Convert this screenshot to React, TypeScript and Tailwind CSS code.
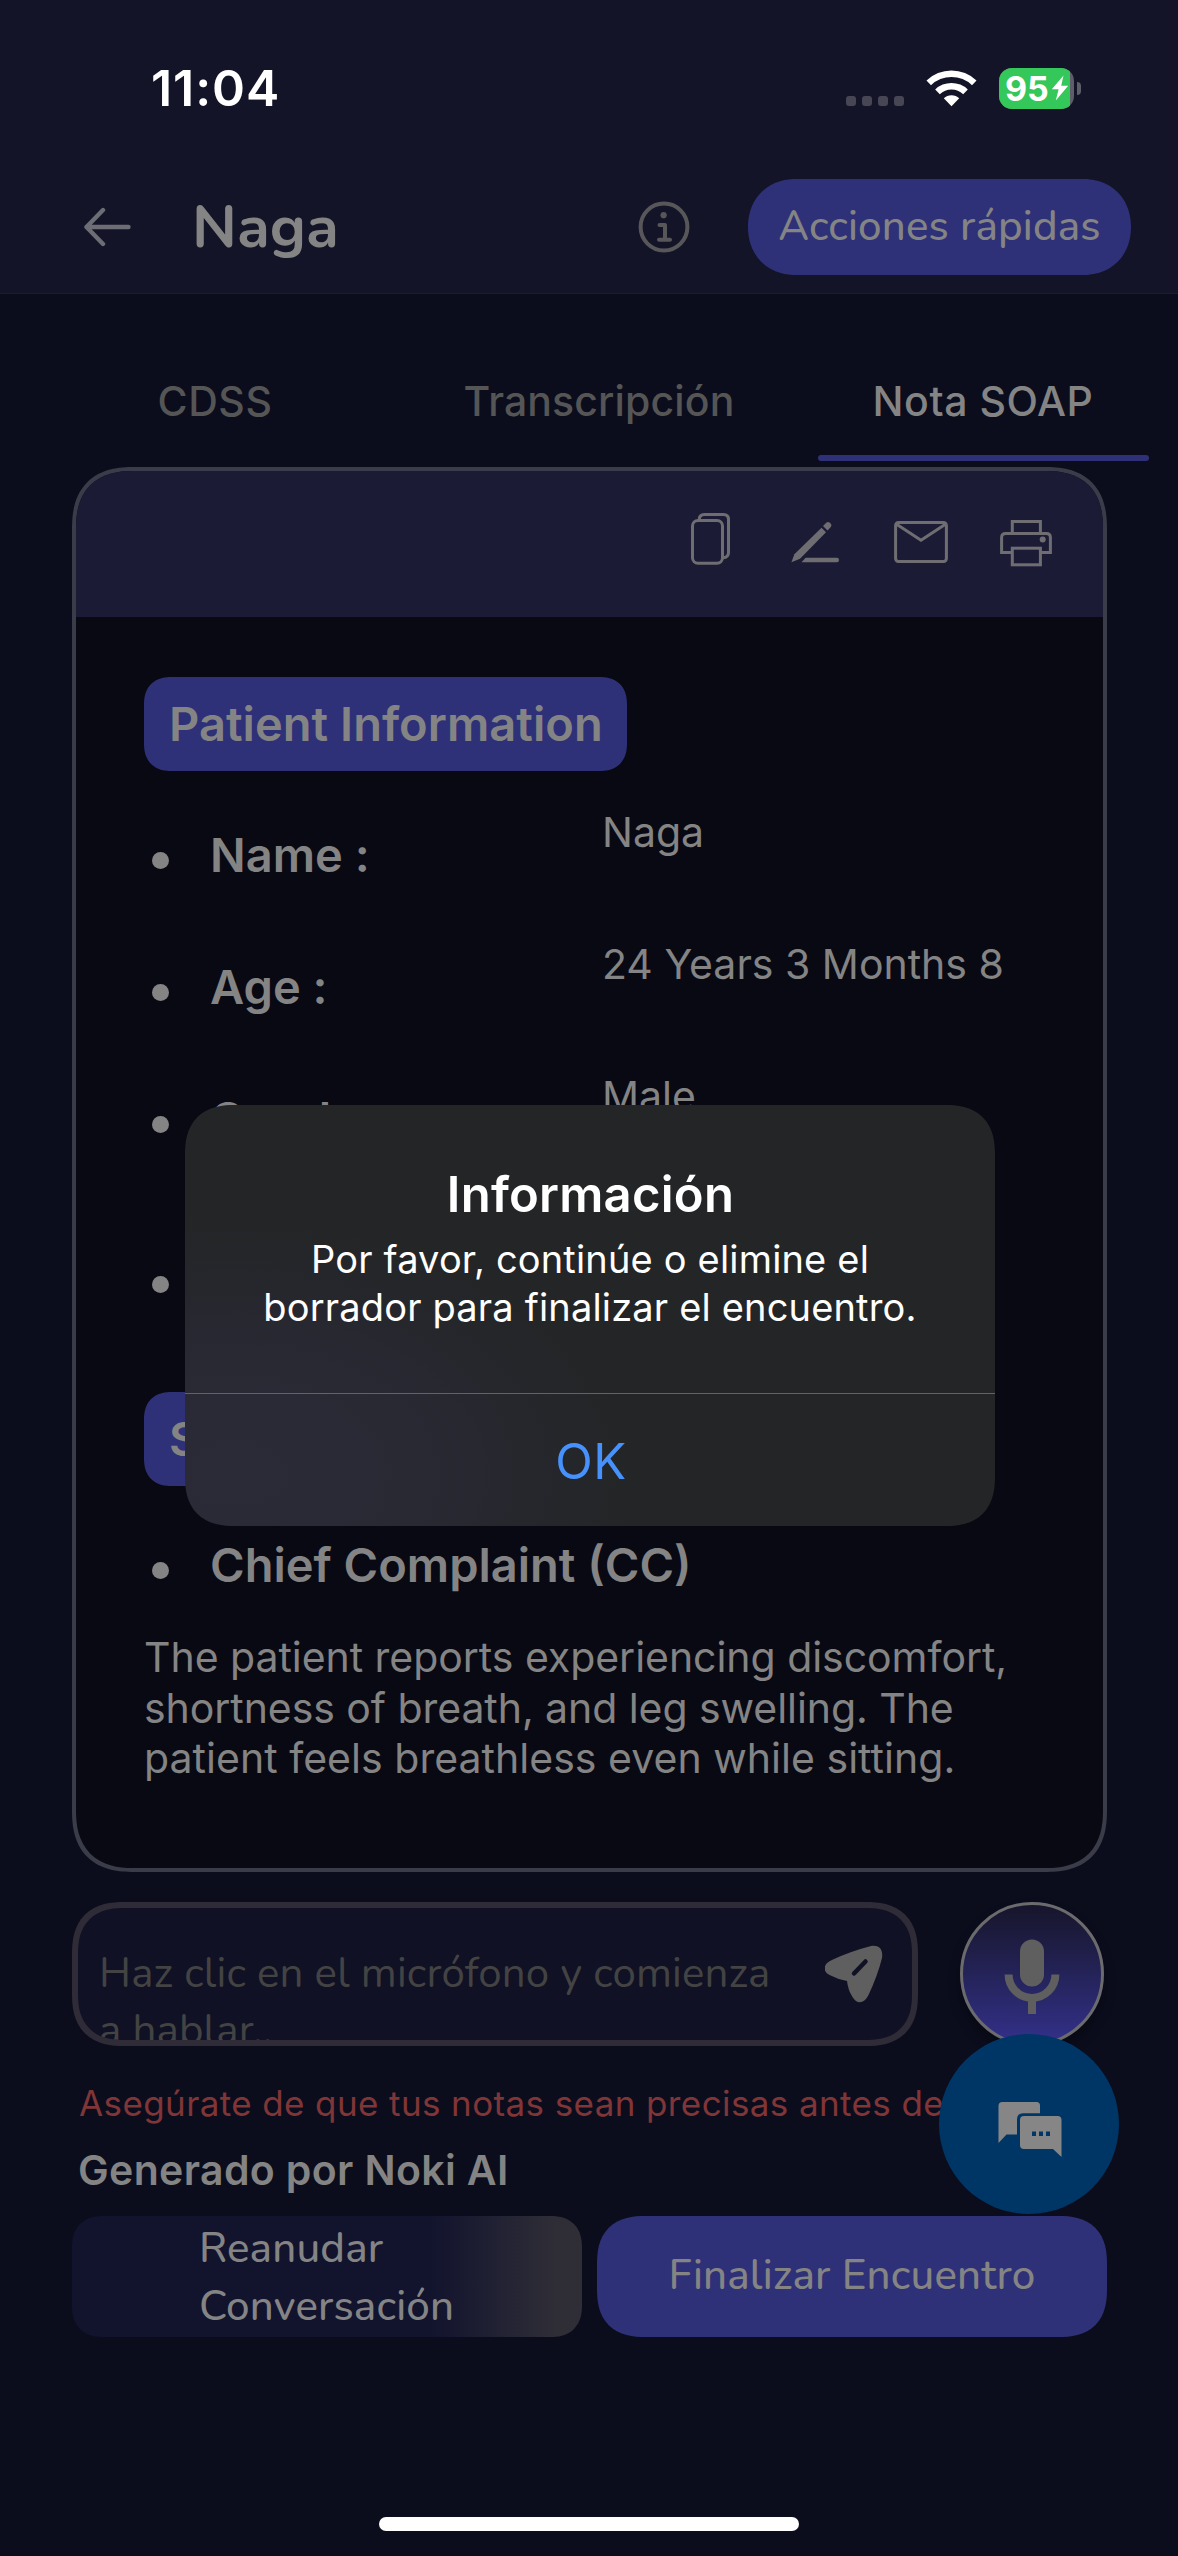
import React from "react";

function StatusBar() {
  return (
    <div className="flex h-[176px] items-center">
      <div className="ml-[151px] w-[695px] text-[50px] leading-[60px] font-semibold tracking-[0.95px] text-white">11:04</div>
      <div className="mt-[26px] flex w-[80px] gap-[6px]">
        {[0, 1, 2, 3].map((i) => (
          <span key={i} className="size-[10px] rounded-[3px] bg-[#464655]" />
        ))}
      </div>
      <svg className="h-[38px] w-[51px]" viewBox="0 0 51 38" fill="none">
        <path d="M0.5 11.5A36 36 0 0 1 50.5 11.5L46 16.2A29.5 29.5 0 0 0 5 16.2Z" fill="#fff" />
        <path d="M9.2 20.5A23.4 23.4 0 0 1 41.8 20.5L37.2 25.2A16.8 16.8 0 0 0 13.8 25.2Z" fill="#fff" />
        <path d="M17.8 29.3A11 11 0 0 1 33.2 29.3L25.5 37.3Z" fill="#fff" />
      </svg>
      <div className="ml-[22px] flex h-[41px] w-[75px] items-center overflow-hidden rounded-[13px] bg-[#5d5e6a]">
        <div className="flex h-[41px] w-[71px] items-center bg-[#34c759] pl-[6px] text-[34px] leading-[41px] font-bold text-white">
          <span className="w-[46px]">95</span>
          <svg className="h-[26px] w-[18px]" viewBox="0 0 18 26">
            <path d="M12.5 0.5L0.8 14.2H7.6L4.8 25.5L17.2 10.8H10.2Z" fill="#fff" />
          </svg>
        </div>
      </div>
      <span className="ml-[3px] h-[13px] w-[4px] rounded-r-full bg-[#5d5e6a]" />
    </div>
  );
}

function Header() {
  return (
    <header className="flex h-[294px] flex-col border-b border-[#1c1d2d] bg-[#131427]">
      <StatusBar />
      <div className="mt-[3px] flex h-[96px] items-center">
        <svg className="ml-[84px] h-[40px] w-[47px]" viewBox="0 0 47 40" fill="none" stroke="#6d6d75" strokeWidth="4.4" strokeLinecap="round" strokeLinejoin="round">
          <path d="M2.5 20H44.5M19 3L2.5 20L19 37" />
        </svg>
        <h1 className="ml-[61px] w-[446px] font-['Nunito','Noto_Sans',sans-serif] text-[60px] leading-[80px] font-bold text-[#848484]">Naga</h1>
        <svg className="h-[52px] w-[52px]" viewBox="0 0 52 52" fill="none" stroke="#57575a" strokeWidth="4" strokeLinecap="round" strokeLinejoin="round">
          <circle cx="26" cy="26" r="23.4" />
          <path d="M21.5 24H27V38.5M21 38.8H32" />
          <circle cx="25.6" cy="14.2" r="3.1" fill="#57575a" stroke="none" />
        </svg>
        <button className="ml-[58px] flex h-[96px] w-[383px] items-center justify-center rounded-[48px] bg-[#2f3178] font-['Nunito','Noto_Sans',sans-serif] text-[42px] leading-[60px] font-medium tracking-[0.15px] text-[#848484] [corner-shape:superellipse(1.1)]">
          Acciones rápidas
        </button>
      </div>
    </header>
  );
}

function Tabs() {
  return (
    <nav className="flex h-[167px] pl-[23px] text-[41px] leading-[60px] font-medium text-[#555556]">
      <span className="w-[384px] pt-[77px] text-center tracking-[0.6px]">CDSS</span>
      <span className="w-[384px] pt-[77px] text-center tracking-[0.12px]">Transcripción</span>
      <span className="flex w-[384px] flex-col items-center pt-[77px] tracking-[0.55px] text-[#848484]">
        Nota SOAP
        <span className="mt-auto h-[6px] w-[331px] rounded-full bg-[#2f3178]" />
      </span>
    </nav>
  );
}

function Toolbar() {
  return (
    <div className="flex h-[146px] items-start justify-end bg-[#1c1b35] pt-[42px] pr-[51px]">
      <svg className="h-[54px] w-[39px]" viewBox="0 0 39 54" fill="none" stroke="#6e6e72" strokeWidth="3">
        <rect x="1.5" y="7.5" width="30" height="42.8" rx="5.5" />
        <path d="M8.3 7V6.5Q8.3 1.5 13.3 1.5H32.5Q37.5 1.5 37.5 6.5V39.5Q37.5 44.5 32 44.8" />
      </svg>
      <svg className="ml-[61px] h-[54px] w-[48px]" viewBox="0 0 48 54" fill="#6e6e72">
        <path d="M0.4 49.2L3.4 41.2L30.5 14.8L35 19.3L9 45.8Z" />
        <path d="M32 13L35.5 9.6Q37.2 8.3 38.8 9.8L39.8 10.8Q41.2 12.4 39.8 14L36.5 17.4Z" />
        <path d="M10.5 49.2L14.6 44.8H46Q48 44.8 48 47Q48 49.2 46 49.2Z" />
      </svg>
      <svg className="ml-[55px] h-[54px] w-[54px]" viewBox="0 0 54 54" fill="none" stroke="#6e6e72" strokeWidth="3">
        <rect x="1.6" y="9.6" width="50.8" height="38.8" rx="2.8" />
        <path d="M2.2 11L27 27.2L51.8 11" />
      </svg>
      <svg className="ml-[52px] h-[54px] w-[52px]" viewBox="0 0 52 54" fill="none" stroke="#6e6e72" strokeWidth="3">
        <path d="M12.3 20V8.4H40.4V20" />
        <path d="M12.3 39.6H1.6V24.4Q1.6 20.4 5.6 20.4H46.4Q50.4 20.4 50.4 24.4V39.6H40.4" />
        <rect x="12.3" y="35.2" width="28.1" height="16.6" />
        <circle cx="42.7" cy="26.4" r="3" fill="#6e6e72" stroke="none" />
      </svg>
    </div>
  );
}

function Chip({ children }: { children: React.ReactNode }) {
  return (
    <div className="flex h-[94px] w-[483px] items-center rounded-[28px] bg-[#2f3178] pl-[25px] text-[47px] leading-[60px] font-semibold tracking-[0.04px] text-[#848484] [corner-shape:superellipse(1.25)]">
      {children}
    </div>
  );
}

function Field({ label, value }: { label?: string; value?: string }) {
  return (
    <div className="flex h-[132px] items-start pl-[8px] whitespace-nowrap">
      <span className="mt-[63px] size-[17px] rounded-full bg-[#848484]" />
      <span className="mt-[36px] ml-[41px] w-[392px] text-[47px] leading-[60px] font-semibold">{label}</span>
      <span className="mt-[18px] text-[41px] leading-[50px]">{value}</span>
    </div>
  );
}

function Note() {
  return (
    <section className="mx-[72px] mt-[6px] h-[1405px] w-[1035px] overflow-hidden rounded-[62px] border-4 border-[#3b3c49] bg-[#090914] [corner-shape:superellipse(1.3)]">
      <Toolbar />
      <div className="flex flex-col pt-[60px] pl-[68px] text-[#848484]">
        <Chip>Patient Information</Chip>
        <div className="mt-[18px] flex flex-col">
          <Field label="Name :" value="Naga" />
          <Field label="Age :" value="24 Years 3 Months 8" />
          <Field label="Gender :" value="Male" />
        </div>
        <div className="mt-[28px] mb-[47px]">
          <Field />
        </div>
        <Chip>Subjective</Chip>
        <div className="mt-[13px]">
          <Field label="Chief Complaint (CC)" />
        </div>
        <p className="pt-px text-[41px] leading-[50.6px] whitespace-nowrap">
          <span className="tracking-[-0.04px]">The patient reports experiencing discomfort,</span>
          <br />
          <span className="tracking-[-0.06px]">shortness of breath, and leg swelling. The</span>
          <br />
          <span className="tracking-[0.03px]">patient feels breathless even while sitting.</span>
        </p>
      </div>
    </section>
  );
}

function Composer() {
  return (
    <div className="mt-[30px] ml-[72px] flex h-[144px] gap-[42px]">
      <div className="flex w-[846px] items-start overflow-hidden rounded-[52px] border-[6px] border-[#2f2b37] bg-[#101124] pl-[21px] [corner-shape:superellipse(1.3)]">
        <p className="w-[726px] pt-[37px] font-['Nunito','Noto_Sans',sans-serif] text-[42px] leading-[57px] tracking-[0.18px] text-[#434343]">
          Haz clic en el micrófono y comienza
          <br />a hablar..
        </p>
        <svg className="mt-[37px] h-[58px] w-[58px]" viewBox="0 0 58 58">
          <path d="M8 14.5C-2.2 18.5-2.8 26 4.5 30Q12 34 22 36Q23 45 27.5 52C32 59.5 39 59 43.5 50Q52.5 31 57 13C58.3 4 54 0 46 1Q25 6.5 8 14.5Z" fill="#5f5f5f" />
          <path d="M29 28.5L40.5 16.5" stroke="#101124" strokeWidth="4.5" strokeLinecap="round" />
        </svg>
      </div>
      <button className="flex size-[144px] justify-center rounded-full border-[3px] border-[#6b6b6e] bg-linear-to-b from-[#17152b] to-[#33308a] pt-[34px] shadow-[0_8px_12px_rgba(0,0,0,0.35)]">
        <svg className="h-[76px] w-[56px]" viewBox="0 0 56 76" fill="none" stroke="#5f5f5f" strokeWidth="8">
          <rect x="16" y="0.5" width="24" height="47" rx="12" fill="#5f5f5f" stroke="none" />
          <path d="M4.6 35.5A23.4 23.4 0 0 0 51.4 35.5M28 59V75" />
        </svg>
      </button>
    </div>
  );
}

function ChatButton() {
  return (
    <button className="absolute top-[2034px] left-[939px] flex size-[180px] rounded-full bg-[#003666] pt-[68px] pl-[59px]">
      <svg className="h-[56px] w-[64px]" viewBox="0 0 64 56" fill="#868686">
        <path d="M4.5 0H38.5Q42 0 42 3.5V11.2H25Q19 11.2 19 17.2V32.5H8.5L0.5 41V4Q0.5 0 4.5 0Z" />
        <path fillRule="evenodd" d="M26 14H59.5Q63.5 14 63.5 18V55L55 47H26Q22 47 22 43V18Q22 14 26 14ZM34 29.5V34H38V29.5ZM41 29.5V34H45V29.5ZM48 29.5V34H52V29.5Z" />
      </svg>
    </button>
  );
}

function Actions() {
  return (
    <div className="mt-[16px] ml-[72px] flex h-[121px] gap-[15px] font-['Nunito','Noto_Sans',sans-serif] text-[42px] leading-[57.3px] font-medium tracking-[0.2px] text-[#848484]">
      <button className="w-[510px] rounded-[32px] bg-linear-to-r from-[#12132d] from-70% to-[#2f2e37] to-95% pt-[4px] pb-[2px] pl-[127px] text-left [corner-shape:superellipse(1.25)]">
        Reanudar
        <br />
        Conversación
      </button>
      <button className="w-[510px] rounded-[48px] bg-[#2f3178] pb-[2px] text-center [corner-shape:superellipse(1.3)]">Finalizar Encuentro</button>
    </div>
  );
}

function Alert() {
  return (
    <div role="alertdialog" className="absolute top-[1105px] left-[185px] flex h-[421px] w-[810px] flex-col overflow-hidden rounded-[50px] bg-[#232526] bg-[radial-gradient(ellipse_400px_260px_at_50px_370px,#2b2b38_0%,#292934_45%,#23252600_100%)] text-center text-white [corner-shape:superellipse(1.3)]">
      <div className="h-[288px] pt-[60px]">
        <h2 className="pl-px text-[49px] leading-[60px] font-semibold tracking-[0.24px]">Información</h2>
        <p className="mt-[10px] text-[38px] leading-[48px] tracking-[0.17px]">
          Por favor, continúe o elimine el
          <br />
          borrador para finalizar el encuentro.
        </p>
      </div>
      <button className="flex-1 border-t border-[#626368] pt-[3px] pl-[2px] text-[49px] leading-[60px] tracking-[0.5px] text-[#4691fb]">OK</button>
    </div>
  );
}

export default function App() {
  return (
    <main className="relative flex h-[2556px] w-[1178px] flex-col overflow-hidden bg-[#0b0d1d] font-['Inter',sans-serif]">
      <Header />
      <Tabs />
      <Note />
      <Composer />
      <p className="mt-[32px] ml-[79px] text-[35px] leading-[50px] tracking-[0.39px] whitespace-nowrap text-[#803536]">
        Asegúrate de que tus notas sean precisas antes de
      </p>
      <p className="mt-[12px] ml-[78px] text-[41px] leading-[60px] font-semibold tracking-[0.36px] text-[#848484]">Generado por Noki AI</p>
      <Actions />
      <span className="mx-auto mt-auto mb-[25px] h-[14px] w-[420px] rounded-full bg-white" />
      <ChatButton />
      <Alert />
    </main>
  );
}
